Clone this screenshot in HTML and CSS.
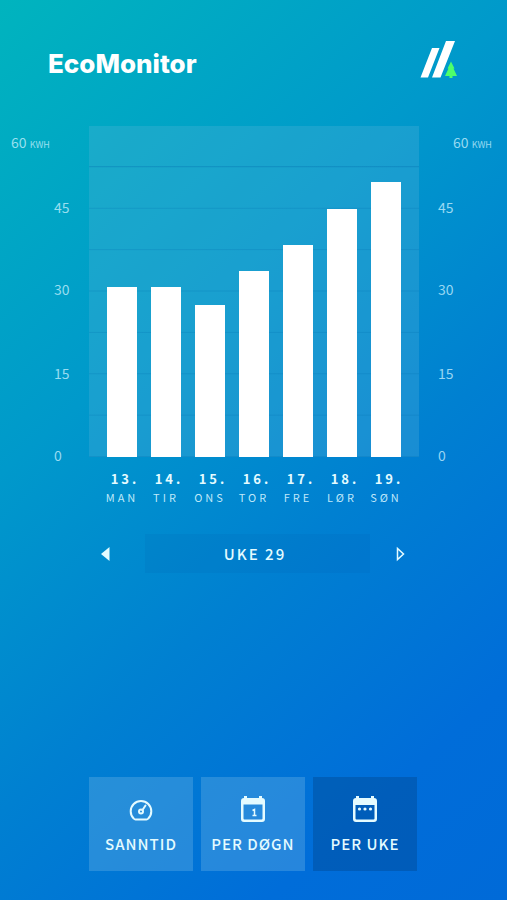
FILE: index.html
```html
<!DOCTYPE html>
<html lang="nb">
<head>
<meta charset="utf-8">
<meta name="viewport" content="width=device-width, initial-scale=1">
<title>EcoMonitor</title>
<link rel="stylesheet" href="styles.css">
</head>
<body>
<div class="app">
  <header class="header">
    <h1 class="title">EcoMonitor</h1>
    <svg class="logo" viewBox="0 0 38 38" aria-hidden="true">
      <path class="logo-bar" d="M13 8h7.500L9 37.500H1.500zM27 1H36L21.500 37.500H13z"/>
      <path class="logo-tree" d="M32 21.500l3.500 7h-1l3.500 7.500h-4.500v2h-3v-2H26l3.500-7.500h-1z"/>
    </svg>
  </header>

  <main>
    <section class="chart">
      <div class="axis axis-left">
        <span class="axis-top">60 <small>KWH</small></span>
        <span>45</span><span>30</span><span>15</span><span>0</span>
      </div>
      <div class="plot">
        <div class="bar" style="height:51.4%"></div>
        <div class="bar" style="height:51.4%"></div>
        <div class="bar" style="height:45.9%"></div>
        <div class="bar" style="height:56.2%"></div>
        <div class="bar" style="height:64%"></div>
        <div class="bar" style="height:75%"></div>
        <div class="bar" style="height:83.2%"></div>
      </div>
      <div class="axis axis-right">
        <span class="axis-top">60 <small>KWH</small></span>
        <span>45</span><span>30</span><span>15</span><span>0</span>
      </div>
      <div class="days">
        <div class="day"><b>13.</b><span>MAN</span></div>
        <div class="day"><b>14.</b><span>TIR</span></div>
        <div class="day"><b>15.</b><span>ONS</span></div>
        <div class="day"><b>16.</b><span>TOR</span></div>
        <div class="day"><b>17.</b><span>FRE</span></div>
        <div class="day"><b>18.</b><span>LØR</span></div>
        <div class="day"><b>19.</b><span>SØN</span></div>
      </div>
    </section>

    <div class="week">
      <button class="arrow" type="button" aria-label="Forrige uke">
        <svg viewBox="0 0 10 16"><path fill="currentColor" d="M8.500 1v14L0 8z"/></svg>
      </button>
      <div class="week-name">UKE 29</div>
      <button class="arrow arrow-next" type="button" aria-label="Neste uke">
        <svg viewBox="0 0 10 16"><path fill="none" stroke="currentColor" stroke-width="1.500" d="M1.500 2.500v11L7.500 8z"/></svg>
      </button>
    </div>
  </main>

  <nav class="tabs">
    <button class="tab" type="button">
      <svg viewBox="0 0 28 28" fill="none" stroke="currentColor" stroke-width="2" stroke-linecap="round" stroke-linejoin="round">
        <path d="M8.500 24.500h11q1 0 1.800-1A10.300 10.300 0 1 0 6.700 23.500q.8 1 1.800 1z"/>
        <circle cx="14" cy="16.500" r="2"/>
        <path d="M15.500 15l3-4.500"/>
      </svg>
      <span>SANNTID</span>
    </button>
    <button class="tab" type="button">
      <svg viewBox="0 0 28 28">
        <path fill="currentColor" fill-rule="evenodd" d="M5 3V1h3v2h12V1h3v2q3 0 3 3v18q0 3-3 3H5q-3 0-3-3V6q0-3 3-3zm-.500 6.500v14q0 1 1 1h17q1 0 1-1v-14z"/>
        <path fill="none" stroke="currentColor" stroke-width="1.500" d="M13.500 15.500l2-1v6M13.500 20.500h4"/>
      </svg>
      <span>PER DØGN</span>
    </button>
    <button class="tab active" type="button" aria-pressed="true">
      <svg viewBox="0 0 28 28">
        <path fill="currentColor" fill-rule="evenodd" d="M5 3V1h3v2h12V1h3v2q3 0 3 3v18q0 3-3 3H5q-3 0-3-3V6q0-3 3-3zm-.500 7v13.500q0 1 1 1h17q1 0 1-1V10z"/>
        <g fill="currentColor"><circle cx="8.500" cy="14" r="1.600"/><circle cx="14" cy="14" r="1.600"/><circle cx="19.500" cy="14" r="1.600"/></g>
      </svg>
      <span>PER UKE</span>
    </button>
  </nav>
</div>
</body>
</html>
```
FILE: styles.css
```css
* { box-sizing: border-box; }

body {
  margin: 0;
  color: #fff;
  font-family: "Noto Sans CJK JP", "Noto Sans", sans-serif;
}

.app {
  display: flex;
  flex-direction: column;
  min-height: 100vh;
  background: linear-gradient(138deg, #00b4be 0%, #0099cb 35%, #0080d1 60%, #006dd9 84%, #006ad8 100%);
}

.header {
  display: flex;
  justify-content: space-between;
  align-items: flex-start;
  padding: 40px 50px 0 48px;
}

.title {
  margin: 7px 0 0;
  font: 800 26px/34px Inter, sans-serif;
}

.logo { width: 38px; height: 38px; }
.logo-bar { fill: #fff; }
.logo-tree { fill: #4dff6a; }

.chart {
  display: grid;
  grid-template-columns: 89fr 330fr 88fr;
  padding-top: 45px;
}

.axis {
  display: grid;
  grid-template-rows: 65px 82px 84px 82px 16px;
  padding-top: 8px;
  color: rgba(205, 242, 255, .75);
  font-size: 14px;
  line-height: 16px;
  font-weight: 400;
}
.axis small { font-size: 9px; }
.axis-left { padding-left: 54px; }
.axis-left .axis-top { margin-left: -43px; }
.axis-right { padding-left: 19px; }
.axis-right .axis-top { margin-left: 15px; }
.axis-top { white-space: nowrap; }

.plot {
  display: flex;
  align-items: flex-end;
  justify-content: space-between;
  height: 331px;
  padding: 0 18px;
  background:
    linear-gradient(rgba(0, 110, 175, .2), rgba(0, 110, 175, .2)) 0 40px / 100% 1px no-repeat,
    linear-gradient(to top, rgba(0, 110, 175, .25) 1px, transparent 1px) 0 0 / 100% 12.5%,
    rgba(100, 185, 220, .25);
}
.bar { width: 30px; background: #fff; }

.days {
  grid-column: 2;
  display: flex;
  justify-content: space-between;
  padding: 6px 11px 0;
}
.day {
  display: flex;
  flex-direction: column;
  align-items: center;
  width: 44px;
  color: rgba(215, 245, 255, .9);
  font-size: 11px;
  line-height: 19px;
  letter-spacing: 3px;
}
.day b {
  padding-left: 6px;
  color: #e4fbff;
  font-size: 13px;
}

.week {
  display: grid;
  grid-template-columns: 44fr 226fr 36fr;
  align-items: center;
  margin: 27px 20% 0;
}
.arrow {
  display: flex;
  padding: 0;
  border: 0;
  background: none;
  color: #e4fbff;
}
.arrow-next { justify-self: end; }
.arrow svg { width: 10px; height: 16px; }
.week-name {
  padding-right: 5px;
  background: rgba(0, 90, 170, .12);
  color: #e4fbff;
  font-size: 15px;
  font-weight: 500;
  line-height: 39px;
  letter-spacing: 2px;
  text-align: center;
}

.tabs {
  display: grid;
  grid-template-columns: repeat(3, 1fr);
  gap: 8px;
  margin: auto 90px 29px 89px;
}
.tab {
  display: flex;
  flex-direction: column;
  align-items: center;
  height: 94px;
  padding: 18px 0 0;
  border: 0;
  background: rgba(110, 180, 230, .35);
  color: #e4fbff;
  font: 500 15px/24px "Noto Sans CJK JP", "Noto Sans", sans-serif;
  letter-spacing: 1px;
  white-space: nowrap;
}
.tab svg { width: 28px; height: 28px; margin-bottom: 9px; }
.tab.active { background: rgba(0, 70, 140, .4); }
```
